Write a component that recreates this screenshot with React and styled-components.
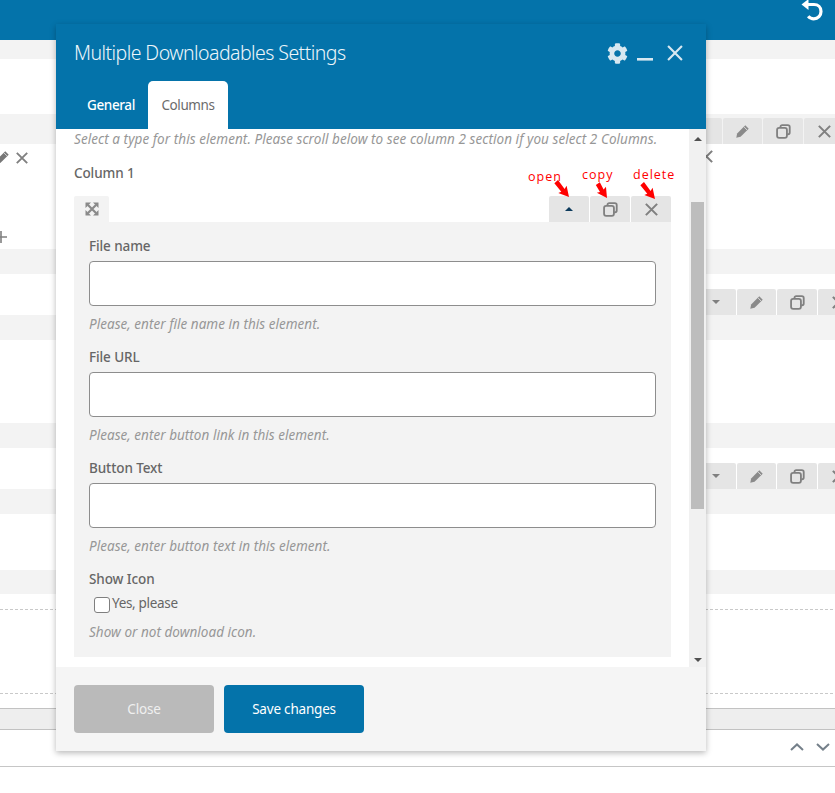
import React from "react";
import styled, { createGlobalStyle } from "styled-components";
import { FaCog } from "react-icons/fa";

const BLUE = "#0473aa";

const GlobalStyle = createGlobalStyle`
  html, body {
    margin: 0;
    padding: 0;
    background: #fff;
  }
  body {
    font-family: "Noto Sans", "Open Sans", sans-serif;
    font-size: 13.5px;
    color: #555;
  }
  * {
    box-sizing: border-box;
  }
`;

const Page = styled.div`
  position: relative;
  width: 835px;
  height: 793px;
  overflow: hidden;
  display: flex;
  flex-direction: column;
`;

const TopBar = styled.div`
  height: 40px;
  background: ${BLUE};
  display: flex;
  justify-content: flex-end;
  padding-right: 11px;
  overflow: hidden;
`;

const Band = styled.div`
  height: ${props => props.h}px;
  background: ${props => (props.grey ? "#f3f3f3" : "#fff")};
  display: flex;
  justify-content: flex-end;
  align-items: flex-end;
`;

const IconRow = styled.div`
  height: 105px;
  background: #fff;
  position: relative;
  display: flex;
  justify-content: space-between;
  align-items: flex-start;
  padding: 6px 122px 0 0;
`;

const LeftIcons = styled.div`
  display: flex;
  align-items: center;
  gap: 6px;
  margin-left: -5px;
`;

const PlusMark = styled.svg`
  position: absolute;
  left: -6px;
  top: 86px;
`;

const Toolbar = styled.div`
  display: flex;
  gap: 1px;
  margin-right: ${props => props.shift}px;
`;

const ToolButton = styled.div`
  width: ${props => props.w || 40}px;
  height: 26px;
  background: #e5e5e5;
  border-radius: 2px 2px 0 0;
  display: flex;
  align-items: center;
  justify-content: center;
  flex-shrink: 0;
`;

const DashedArea = styled.div`
  height: 114px;
  padding: 15px 2px 15px 0;
`;

const DashedBox = styled.div`
  height: 85px;
  border-top: 1px dashed #c9c9c9;
  border-bottom: 1px dashed #c9c9c9;
`;

const GreyStrip = styled.div`
  height: 22px;
  background: #eee;
  border-top: 1px solid #c2c2c2;
  border-bottom: 1px solid #c2c2c2;
`;

const ArrowRow = styled.div`
  height: 37px;
  border-bottom: 1px solid #c6c6c6;
  display: flex;
  justify-content: flex-end;
  align-items: center;
  gap: 12px;
  padding: 0 5px 2px 0;
`;

const Modal = styled.div`
  position: absolute;
  left: 56px;
  top: 24px;
  width: 650px;
  height: 727px;
  display: flex;
  flex-direction: column;
  box-shadow: 0 2px 6px rgba(0, 0, 0, 0.28);
`;

const ModalHeader = styled.div`
  height: 105px;
  flex-shrink: 0;
  background: ${BLUE};
  display: flex;
  flex-direction: column;
  justify-content: space-between;
`;

const TitleRow = styled.div`
  display: flex;
  align-items: center;
  justify-content: space-between;
  padding: 16px 23px 0 18px;
`;

const Title = styled.div`
  font-size: 19.5px;
  font-weight: 300;
  line-height: 26px;
  color: #eef6fa;
  letter-spacing: -0.56px;
`;

const HeaderIcons = styled.div`
  display: flex;
  align-items: center;
  gap: 9px;
`;

const CloseIcon = styled.span`
  display: flex;
  margin-left: 5px;
`;

const Tabs = styled.div`
  display: flex;
  padding-left: 18px;
`;

const Tab = styled.div`
  height: 48px;
  display: flex;
  align-items: center;
  justify-content: center;
  font-size: 13.5px;
  letter-spacing: -0.4px;
  border-radius: 5px 5px 0 0;
  background: ${props => (props.active ? "#fff" : "transparent")};
  color: ${props => (props.active ? "#6b6b6b" : "#fff")};
  font-weight: ${props => (props.active ? 400 : 500)};
  width: ${props => (props.active ? 80 : 74)}px;
`;

const ModalBody = styled.div`
  height: 538px;
  flex-shrink: 0;
  background: #fff;
  display: flex;
  position: relative;
`;

const ScrollArea = styled.div`
  flex: 1;
  height: 100%;
  padding: 0 18px;
  overflow: hidden;
`;

const TopHint = styled.div`
  height: 20px;
  line-height: 20px;
  font-style: italic;
  color: #979797;
  letter-spacing: 0.06px;
  white-space: nowrap;
`;

const ColumnLabel = styled.div`
  margin-top: 14px;
  height: 20px;
  line-height: 20px;
  font-weight: 500;
  letter-spacing: -0.1px;
  color: #666;
`;

const AccordionHead = styled.div`
  margin-top: 13px;
  height: 26px;
  display: flex;
  justify-content: space-between;
`;

const ExpandTab = styled.div`
  width: 35px;
  background: #f3f3f3;
  border-radius: 2px 2px 0 0;
  display: flex;
  align-items: center;
  justify-content: center;
`;

const Panel = styled.div`
  height: 435px;
  background: #f3f3f3;
  padding: 14px 15px 0;
`;

const Field = styled.div`
  height: 111px;
`;

const FieldLabel = styled.div`
  height: 20px;
  line-height: 21px;
  font-weight: 500;
  letter-spacing: -0.1px;
  color: #666;
`;

const TextInput = styled.input`
  display: block;
  width: 567px;
  height: 45px;
  margin-top: 5px;
  background: #fff;
  border: 1px solid #8d8d8d;
  border-radius: 4px;
  outline: none;
`;

const Hint = styled.div`
  margin-top: 8px;
  height: 20px;
  line-height: 20px;
  font-style: italic;
  color: #979797;
  letter-spacing: 0.03px;
`;

const CheckRow = styled.label`
  display: flex;
  align-items: flex-start;
  height: 20px;
  margin-top: 5px;
  padding-left: 5px;
  color: #666;
  letter-spacing: -0.32px;
  line-height: 18px;
`;

const CheckBox = styled.span`
  width: 16px;
  height: 16px;
  margin: 3px 2px 0 0;
  background: #fff;
  border: 1px solid #7f7f7f;
  border-radius: 3px;
  flex-shrink: 0;
`;

const Scrollbar = styled.div`
  width: 17px;
  height: 100%;
  flex-shrink: 0;
  background: #f1f1f1;
  display: flex;
  flex-direction: column;
  align-items: center;
  justify-content: space-between;
  padding: 8px 0 5px;
  position: relative;
`;

const ScrollThumb = styled.div`
  position: absolute;
  top: 73px;
  left: 2px;
  width: 13px;
  height: 307px;
  background: #bdbdbd;
`;

const Note = styled.span`
  position: absolute;
  left: ${props => props.x}px;
  top: ${props => props.y}px;
  font-family: "Open Sans", sans-serif;
  font-size: 12.5px;
  line-height: 14px;
  letter-spacing: 1px;
  color: #f00;
`;

const NoteArrows = styled.svg`
  position: absolute;
  left: 460px;
  top: 25px;
  overflow: visible;
`;

const ModalFooter = styled.div`
  flex: 1;
  background: #f5f5f5;
  display: flex;
  gap: 10px;
  padding: 18px 18px 0;
`;

const FooterButton = styled.div`
  width: 140px;
  height: 48px;
  border-radius: 4px;
  background: ${props => (props.primary ? BLUE : "#bababa")};
  color: ${props => (props.primary ? "#fff" : "#f0f0f0")};
  display: flex;
  align-items: center;
  justify-content: center;
  letter-spacing: -0.2px;
`;

const Pencil = ({ color = "#8a8a8a" }) => (
  <svg width="15" height="15" viewBox="0 0 14 14">
    <path d="M9.6 1.2 12.8 4.4 5.2 12 1.2 12.9 2 8.8Z" fill={color} />
    <path d="M8.5 2.8 11.2 5.5" stroke="#e5e5e5" strokeWidth="0.8" />
  </svg>
);

const Cross = ({ size = 12, color = "#808080", width = 1.9 }) => (
  <svg width={size} height={size} viewBox="0 0 12 12">
    <path
      d="M0.8 0.8 11.2 11.2M11.2 0.8 0.8 11.2"
      stroke={color}
      strokeWidth={width}
      fill="none"
    />
  </svg>
);

const Copy = () => (
  <svg width="15" height="15" viewBox="0 0 14 14" fill="none">
    <path
      d="M4.2 3V2.6C4.2 1.6 4.8 1 5.8 1H11C12 1 12.8 1.8 12.8 2.8V8C12.8 9 12.2 9.6 11.2 9.6H10.4"
      stroke="#808080"
      strokeWidth="1.7"
    />
    <rect
      x="1"
      y="3.6"
      width="9.2"
      height="9.4"
      rx="2"
      stroke="#808080"
      strokeWidth="1.7"
    />
  </svg>
);

const Caret = ({ up, color = "#808080" }) => (
  <svg width="8" height="4" viewBox="0 0 8 4">
    <path d={up ? "M0 4 4 0 8 4Z" : "M0 0 8 0 4 4Z"} fill={color} />
  </svg>
);

const Undo = () => (
  <svg width="24" height="24" viewBox="0 0 24 24" fill="none" style={{ marginTop: -2 }}>
    <path
      d="M7.5 6.5H14C18 6.5 21 9.4 21 13.4C21 17.6 18 20.8 13.8 20.8C11.4 20.8 9.6 19.8 8.2 18.2"
      stroke="#fff"
      strokeWidth="3.2"
    />
    <path d="M1.5 6.5 8.5 1V12Z" fill="#fff" />
  </svg>
);

const Expand = () => (
  <svg width="14" height="14" viewBox="0 0 14 14" fill="none">
    <path d="M0.5 0.5H6L0.5 6ZM13.5 0.5V6L8 0.5ZM0.5 13.5V8L6 13.5ZM13.5 13.5H8L13.5 8Z" fill="#8a8a8a" />
    <path d="M3 3 11 11M11 3 3 11" stroke="#8a8a8a" strokeWidth="2.2" />
  </svg>
);

const Chevron = ({ up }) => (
  <svg width="14" height="8" viewBox="0 0 14 8" fill="none">
    <path
      d={up ? "M1 7 7 1.4 13 7" : "M1 1 7 6.6 13 1"}
      stroke="#75808a"
      strokeWidth="2"
    />
  </svg>
);

// red callout arrow, tip sits on the origin and points along +x
const NoteArrow = ({ x, y, angle, len }) => (
  <path
    transform={`translate(${x} ${y}) rotate(${angle})`}
    d={`M0 0 -10 -5.5 -9 -2 -${len} -2.8 -${len} 2 -9 2.4 -10 5.5Z`}
    fill="#f00"
  />
);

const RowToolbar = () => (
  <Toolbar shift={-23}>
    <ToolButton>
      <Caret />
    </ToolButton>
    <ToolButton w={39}>
      <Pencil />
    </ToolButton>
    <ToolButton>
      <Copy />
    </ToolButton>
    <ToolButton>
      <Cross size={13} />
    </ToolButton>
  </Toolbar>
);

const fields = [
  { label: "File name", hint: "Please, enter file name in this element." },
  { label: "File URL", hint: "Please, enter button link in this element." },
  { label: "Button Text", hint: "Please, enter button text in this element." }
];

const App = () => (
  <Page>
    <GlobalStyle />
    <TopBar>
      <Undo />
    </TopBar>
    <Band grey h={19} />
    <Band h={55} />
    <Band grey h={30}>
      <Toolbar shift={-9}>
        <ToolButton />
        <ToolButton w={39}>
          <Pencil />
        </ToolButton>
        <ToolButton>
          <Copy />
        </ToolButton>
        <ToolButton>
          <Cross size={13} />
        </ToolButton>
      </Toolbar>
    </Band>
    <IconRow>
      <LeftIcons>
        <Pencil color="#777" />
        <Cross size={12} />
      </LeftIcons>
      <Cross size={13} />
      <PlusMark width="14" height="14" viewBox="0 0 14 14">
        <path d="M7 1V13M1 7H13" stroke="#808080" strokeWidth="1.6" />
      </PlusMark>
    </IconRow>
    <Band grey h={25} />
    <Band h={41}>
      <RowToolbar />
    </Band>
    <Band grey h={25} />
    <Band h={83} />
    <Band grey h={25} />
    <Band h={41}>
      <RowToolbar />
    </Band>
    <Band grey h={25} />
    <Band h={56} />
    <Band grey h={24} />
    <DashedArea>
      <DashedBox />
    </DashedArea>
    <GreyStrip />
    <ArrowRow>
      <Chevron up />
      <Chevron />
    </ArrowRow>

    <Modal>
      <ModalHeader>
        <TitleRow>
          <Title>Multiple Downloadables Settings</Title>
          <HeaderIcons>
            <FaCog size={21} color="#d8e8f1" />
            <svg width="16" height="20" viewBox="0 0 16 20">
              <rect x="0" y="15" width="16" height="2.6" fill="#d8e8f1" />
            </svg>
            <CloseIcon>
              <Cross size={16} color="#d8e8f1" width={1.6} />
            </CloseIcon>
          </HeaderIcons>
        </TitleRow>
        <Tabs>
          <Tab>General</Tab>
          <Tab active>Columns</Tab>
        </Tabs>
      </ModalHeader>
      <ModalBody>
        <ScrollArea>
          <TopHint>
            Select a type for this element. Please scroll below to see column 2
            section if you select 2 Columns.
          </TopHint>
          <ColumnLabel>Column 1</ColumnLabel>
          <AccordionHead>
            <ExpandTab>
              <Expand />
            </ExpandTab>
            <Toolbar>
              <ToolButton>
                <Caret up color="#0c3a5c" />
              </ToolButton>
              <ToolButton>
                <Copy />
              </ToolButton>
              <ToolButton>
                <Cross size={13} />
              </ToolButton>
            </Toolbar>
          </AccordionHead>
          <Panel>
            {fields.map(field => (
              <Field key={field.label}>
                <FieldLabel>{field.label}</FieldLabel>
                <TextInput readOnly />
                <Hint>{field.hint}</Hint>
              </Field>
            ))}
            <FieldLabel>Show Icon</FieldLabel>
            <CheckRow>
              <CheckBox />
              Yes, please
            </CheckRow>
            <Hint>Show or not download icon.</Hint>
          </Panel>
        </ScrollArea>
        <Scrollbar>
          <Caret up color="#505050" />
          <ScrollThumb />
          <Caret color="#505050" />
        </Scrollbar>
        <Note x={472} y={41}>open</Note>
        <Note x={526} y={39}>copy</Note>
        <Note x={577} y={39}>delete</Note>
        <NoteArrows width="130" height="50" viewBox="0 0 130 50">
          <NoteArrow x={53} y={43} angle={49} len={20} />
          <NoteArrow x={91} y={44} angle={56} len={17} />
          <NoteArrow x={139} y={45} angle={49} len={20} />
        </NoteArrows>
      </ModalBody>
      <ModalFooter>
        <FooterButton>Close</FooterButton>
        <FooterButton primary>Save changes</FooterButton>
      </ModalFooter>
    </Modal>
  </Page>
);

export default App;
